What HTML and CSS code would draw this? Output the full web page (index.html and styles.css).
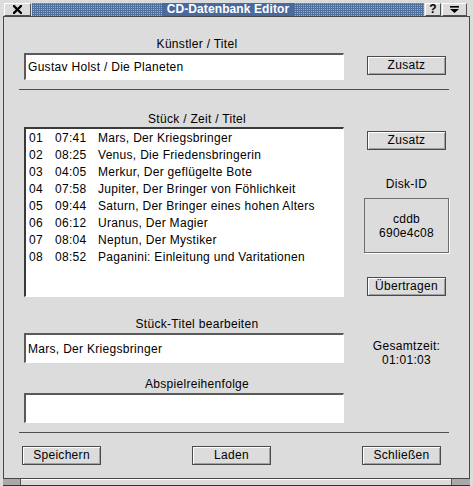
FILE: index.html
```html
<!DOCTYPE html>
<html lang="de">
<head>
<meta charset="utf-8">
<title>CD-Datenbank Editor</title>
<link rel="stylesheet" href="styles.css">
</head>
<body>
<div class="window">
  <div class="titlebar">
    <div class="tbtn close">
      <svg width="9" height="9" viewBox="0 0 9 9"><path d="M1 1L8 8M8 1L1 8" stroke="#000" stroke-width="2.3" stroke-linecap="square"/></svg>
    </div>
    <div class="caption"><span class="caption-text">CD-Datenbank Editor</span></div>
    <div class="tbtn help">?</div>
    <div class="tbtn menu">
      <svg width="9" height="7" viewBox="0 0 9 7"><rect x="0" y="0" width="9" height="1.6" fill="#000"/><polygon points="0,3 9,3 4.5,7" fill="#000"/></svg>
    </div>
  </div>

  <div class="client">
    <div class="sec sec1">
      <div class="main">
        <div class="label">Künstler / Titel</div>
        <div class="field field-s">Gustav Holst / Die Planeten</div>
      </div>
      <div class="side">
        <button class="btn btn-top">Zusatz</button>
      </div>
    </div>

    <div class="sep"></div>

    <div class="sec sec2">
      <div class="main">
        <div class="label label-list">Stück / Zeit / Titel</div>
        <div class="list">
          <div class="track"><span>01</span><span>07:41</span><span>Mars, Der Kriegsbringer</span></div>
          <div class="track"><span>02</span><span>08:25</span><span>Venus, Die Friedensbringerin</span></div>
          <div class="track"><span>03</span><span>04:05</span><span>Merkur, Der geflügelte Bote</span></div>
          <div class="track"><span>04</span><span>07:58</span><span>Jupiter, Der Bringer von Föhlichkeit</span></div>
          <div class="track"><span>05</span><span>09:44</span><span>Saturn, Der Bringer eines hohen Alters</span></div>
          <div class="track"><span>06</span><span>06:12</span><span>Uranus, Der Magier</span></div>
          <div class="track"><span>07</span><span>08:04</span><span>Neptun, Der Mystiker</span></div>
          <div class="track"><span>08</span><span>08:52</span><span>Paganini: Einleitung und Varitationen</span></div>
        </div>
      </div>
      <div class="side">
        <button class="btn btn-top">Zusatz</button>
        <div class="disk-label">Disk-ID</div>
        <div class="disk-box">
          <div>cddb</div>
          <div>690e4c08</div>
        </div>
        <button class="btn btn-send">Übertragen</button>
      </div>
    </div>

    <div class="sec sec3">
      <div class="main">
        <div class="label">Stück-Titel bearbeiten</div>
        <div class="field">Mars, Der Kriegsbringer</div>
        <div class="label label-gap">Abspielreihenfolge</div>
        <div class="field"></div>
      </div>
      <div class="side">
        <div class="total">
          <div>Gesamtzeit:</div>
          <div>01:01:03</div>
        </div>
      </div>
    </div>

    <div class="sep sep2"></div>

    <div class="actions">
      <button class="btn">Speichern</button>
      <button class="btn">Laden</button>
      <button class="btn">Schließen</button>
    </div>
  </div>

  <div class="bottomframe">
    <div class="handle handle-l"></div>
    <div class="frame-mid"></div>
    <div class="handle handle-r"></div>
  </div>
</div>
</body>
</html>
```

FILE: styles.css
```css
html, body {
  margin: 0;
  padding: 0;
  background: #dcdcdc;
}

body {
  font-family: "Liberation Sans", Arial, sans-serif;
  font-size: 12px;
  letter-spacing: 0.3px;
  color: #000;
}

.window {
  width: 473px;
  height: 486px;
  background: #dcdcdc;
  display: flex;
  flex-direction: column;
  overflow: hidden;
}

/* ---------- title bar ---------- */
.titlebar {
  height: 16px;
  box-sizing: border-box;
  padding: 3px 0 0 4px;
  display: flex;
}

.tbtn {
  height: 13px;
  box-sizing: border-box;
  background: #dcdcdc;
  border-top: 1px solid #ffffff;
  border-left: 1px solid #ffffff;
  border-right: 1px solid #505050;
  border-bottom: 1px solid #505050;
  display: flex;
  align-items: center;
  justify-content: center;
}

.close {
  width: 27px;
}

.help {
  width: 16px;
  margin-left: 1px;
  font-weight: bold;
  font-size: 12px;
  line-height: 11px;
  letter-spacing: 0;
}

.menu {
  width: 25px;
  margin-left: 1px;
}

.caption {
  width: 392px;
  height: 13px;
  margin-left: 1px;
  background-color: #50709f;
  background-image: conic-gradient(#93acd6 0 25%, #50709f 0);
  background-size: 2px 2px;
  display: flex;
  align-items: center;
  justify-content: center;
}

.caption-text {
  background: #4a6a9e;
  color: #ffffff;
  font-weight: bold;
  line-height: 13px;
  letter-spacing: 0.1px;
  padding: 0 5px;
}

/* ---------- client area ---------- */
.client {
  margin: 0 3px;
  height: 463px;
  box-sizing: border-box;
  border: 1px solid #474747;
  display: flex;
  flex-direction: column;
}

.sec {
  display: flex;
  padding-left: 20px;
}

.sec1 {
  padding-top: 20px;
}

.sec2 {
  margin-top: 22px;
}

.sec3 {
  margin-top: 20px;
}

.main {
  width: 320px;
  display: flex;
  flex-direction: column;
}

.side {
  width: 85px;
  margin-left: 20px;
  display: flex;
  flex-direction: column;
  align-items: center;
}

.label {
  margin-right: -26px;
  text-align: center;
  line-height: 14px;
  height: 14px;
  margin-bottom: 2px;
  white-space: nowrap;
}

.label-list {
  margin-bottom: 1px;
}

.label-gap {
  margin-top: 14px;
}

.field {
  height: 30px;
  box-sizing: border-box;
  background: #ffffff;
  border-top: 2px solid #5a5a5a;
  border-left: 2px solid #5a5a5a;
  border-right: 1px solid #ffffff;
  border-bottom: 1px solid #ffffff;
  padding-left: 2px;
  display: flex;
  align-items: center;
  white-space: nowrap;
}

.field-s {
  height: 27px;
}

.list {
  height: 170px;
  box-sizing: border-box;
  background: #ffffff;
  border-top: 2px solid #3a3a3a;
  border-left: 2px solid #3a3a3a;
  border-right: 1px solid #ffffff;
  border-bottom: 1px solid #ffffff;
  padding: 1px 0 0 3px;
}

.track {
  display: grid;
  grid-template-columns: 26px 43px 1fr;
  line-height: 17px;
  white-space: nowrap;
}

.sep {
  height: 1px;
  width: 430px;
  margin-left: 15px;
  margin-top: 9px;
  background: #505050;
}

/* ---------- buttons ---------- */
.btn {
  width: 79px;
  height: 19px;
  box-sizing: border-box;
  padding: 0;
  margin: 0;
  font-family: inherit;
  font-size: 12px;
  letter-spacing: inherit;
  line-height: 17px;
  color: #000;
  background: #dcdcdc;
  border: 1px solid #4a4a4a;
  box-shadow: inset 1px 1px 0 #ffffff, inset -1px -1px 0 #a0a0a0;
  text-align: center;
  white-space: nowrap;
}

.btn-top {
  margin-top: 19px;
}

.disk-label {
  margin-top: 27px;
  line-height: 14px;
}

.disk-box {
  margin-top: 7px;
  width: 85px;
  height: 55px;
  box-sizing: border-box;
  border: 1px solid #6e6e6e;
  box-shadow: 1px 1px 0 #ffffff;
  display: flex;
  flex-direction: column;
  align-items: center;
  justify-content: center;
  line-height: 14px;
}

.btn-send {
  margin-top: 24px;
}

.total {
  margin-top: 22px;
  line-height: 14px;
  text-align: center;
}

.actions {
  display: flex;
  gap: 91px;
  padding-left: 18px;
  margin-top: 13px;
}

/* ---------- bottom frame ---------- */
.bottomframe {
  height: 7px;
  box-sizing: border-box;
  margin: 0 3px;
  display: flex;
  border-bottom: 1px solid #333333;
}

.handle {
  background: #a9a9a9;
}

.handle-l {
  width: 17px;
  border-right: 1px solid #555555;
}

.handle-r {
  width: 18px;
  border-left: 1px solid #555555;
}

.frame-mid {
  flex: 1;
  border-top: 1px solid #ffffff;
}
```
